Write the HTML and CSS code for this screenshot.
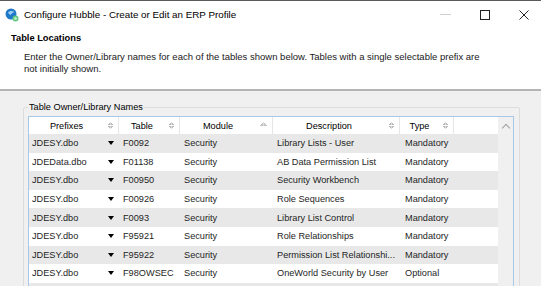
FILE: index.html
```html
<!DOCTYPE html>
<html lang="en">
<head>
    <meta charset="UTF-8">
    <title>Configure Hubble</title>
    <link rel="stylesheet" href="styles.css">
</head>
<body>

<div class="window">
    <div class="titlebar">
        <svg class="app-icon" width="14" height="14" viewBox="0 0 14 14">
            <circle cx="6" cy="6" r="5.5" fill="#1f78c8"/>
            <path d="M3 4.5 Q6 2 9.5 4 Q7 4.5 5.5 7 Q4 6 3 4.5Z" fill="#9fd0f5"/>
            <circle cx="10.5" cy="10.5" r="3" fill="#5cc87a"/>
            <circle cx="10.5" cy="10.5" r="1.6" fill="#b8ecc4"/>
        </svg>
        <span class="title">Configure Hubble - Create or Edit an ERP Profile</span>
        <div class="controls">
            <span class="ctl ctl-min"></span>
            <svg class="ctl" width="10" height="10" viewBox="0 0 10 10"><rect x="0.5" y="0.5" width="9" height="9" fill="none" stroke="#222"/></svg>
            <svg class="ctl" width="10" height="10" viewBox="0 0 10 10"><path d="M0.5 0.5 L9.5 9.5 M9.5 0.5 L0.5 9.5" stroke="#222" stroke-width="1"/></svg>
        </div>
    </div>

    <div class="header">
        <h1>Table Locations</h1>
        <p>Enter the Owner/Library names for each of the tables shown below. Tables with a single selectable prefix are not initially shown.</p>
    </div>

    <div class="content">
        <fieldset class="group">
            <legend>Table Owner/Library Names</legend>
            <div class="grid">
                <div class="grid-body">
                    <div class="row head">
                        <div class="c c-prefix"><span class="lbl">Prefixes</span><span class="sort"></span></div>
                        <div class="c c-table"><span class="lbl">Table</span><span class="sort"></span></div>
                        <div class="c c-module"><span class="lbl">Module</span><span class="sort up"></span></div>
                        <div class="c c-desc"><span class="lbl">Description</span><span class="sort"></span></div>
                        <div class="c c-type"><span class="lbl">Type</span><span class="sort"></span></div>
                        <div class="c c-fill"></div>
                    </div>
                    <div id="rows"></div>
                </div>
                <div class="scrollbar"><span class="chev"></span></div>
            </div>
        </fieldset>
    </div>
</div>

<script>
    const data = [
        ['JDESY.dbo', 'F0092', 'Security', 'Library Lists - User', 'Mandatory'],
        ['JDEData.dbo', 'F01138', 'Security', 'AB Data Permission List', 'Mandatory'],
        ['JDESY.dbo', 'F00950', 'Security', 'Security Workbench', 'Mandatory'],
        ['JDESY.dbo', 'F00926', 'Security', 'Role Sequences', 'Mandatory'],
        ['JDESY.dbo', 'F0093', 'Security', 'Library List Control', 'Mandatory'],
        ['JDESY.dbo', 'F95921', 'Security', 'Role Relationships', 'Mandatory'],
        ['JDESY.dbo', 'F95922', 'Security', 'Permission List Relationshi...', 'Mandatory'],
        ['JDESY.dbo', 'F98OWSEC', 'Security', 'OneWorld Security by User', 'Optional'],
        ['', '', '', '', '']
    ];
    const rows = document.getElementById('rows');
    data.forEach(function(r) {
        const row = document.createElement('div');
        row.className = 'row';
        row.innerHTML =
            '<div class="c c-prefix"><span class="lbl">' + r[0] + '</span>' + (r[0] ? '<span class="drop"></span>' : '') + '</div>' +
            '<div class="c c-table">' + r[1] + '</div>' +
            '<div class="c c-module">' + r[2] + '</div>' +
            '<div class="c c-desc">' + r[3] + '</div>' +
            '<div class="c c-type">' + r[4] + '</div>' +
            '<div class="c c-fill"></div>';
        rows.appendChild(row);
    });
</script>
</body>
</html>
```

FILE: styles.css
```css
body {
    margin: 0;
    width: 541px;
    height: 286px;
    overflow: hidden;
    font-family: "Liberation Sans", Arial, sans-serif;
    font-size: 9px;
    color: #000;
    background: #f0f0f0;
}
.window {
    border-top: 1px solid #5a5a5a;
}
.titlebar {
    height: 27px;
    display: flex;
    align-items: center;
    background: #fff;
    padding-left: 5px;
}
.app-icon {
    margin-right: 5px;
}
.title {
    font-size: 9.8px;
    color: #000;
}
.controls {
    margin-left: auto;
    display: flex;
    align-items: center;
    height: 100%;
}
.ctl {
    display: block;
    margin-left: 29px;
}
.ctl:last-child {
    margin-right: 12px;
}
.ctl-min {
    width: 11px;
    height: 1px;
    background: #d0d0d0;
}
.header {
    background: #fff;
    height: 63px;
    box-sizing: border-box;
    padding: 4px 0 0 11px;
    border-bottom: 2px solid #b4b4b4;
}
h1 {
    margin: 0;
    font-size: 9.3px;
    line-height: 13px;
    font-weight: bold;
}
.header p {
    margin: 6px 0 0 13px;
    line-height: 12px;
    width: 462px;
    font-size: 9.5px;
    color: #1a1a1a;
}
.content {
    padding: 10px 0 0 23px;
}
.group {
    margin: 0;
    padding: 2px 5px 0 4px;
    width: 497px;
    box-sizing: border-box;
    border: 1px solid #dcdcdc;
    border-radius: 2px;
}
.group legend {
    padding: 0 1px;
    margin-left: 0;
    line-height: 13px;
    font-size: 9.2px;
}
.grid {
    display: flex;
    border: 1px solid #a8c8e8;
    height: 200px;
    background: #fff;
    font-size: 9.2px;
}
.grid-body {
    width: 469px;
}
.row {
    display: flex;
    height: 18.6px;
    align-items: center;
    color: #1e1e1e;
}
#rows .row:nth-child(odd) {
    background: #e8e8e8;
}
.row.head {
    height: 17px;
    background: #fff;
    color: #000;
}
.c {
    box-sizing: border-box;
    padding-left: 4px;
    white-space: nowrap;
    overflow: hidden;
    display: flex;
    align-items: center;
    height: 100%;
}
.c-prefix { width: 90px; padding-left: 3px; }
.c-table { width: 61px; }
.c-module { width: 93px; }
.c-desc { width: 127px; }
.c-type { width: 54px; padding-left: 5px; }
.c-fill { width: 44px; }
.c-prefix .lbl {
    flex: 1;
}
.head .c {
    border-right: 1px solid #e6e6e6;
    padding-left: 0;
}
.head .c-fill {
    border-right: none;
}
.head .lbl {
    flex: 1;
    text-align: center;
}
.sort {
    width: 5px;
    height: 7px;
    margin: 0 5px 0 4px;
    background:
        linear-gradient(to bottom right, transparent 50%, #b8b8b8 50%) 0 0 / 2.5px 3px no-repeat,
        linear-gradient(to bottom left, transparent 50%, #b8b8b8 50%) 2.5px 0 / 2.5px 3px no-repeat,
        linear-gradient(to top right, transparent 50%, #b8b8b8 50%) 0 4px / 2.5px 3px no-repeat,
        linear-gradient(to top left, transparent 50%, #b8b8b8 50%) 2.5px 4px / 2.5px 3px no-repeat;
}
.sort.up {
    width: 7px;
    height: 4px;
    margin-bottom: 3px;
    background:
        linear-gradient(to bottom right, transparent 50%, #c4c4c4 50%) 0 0 / 3.5px 4px no-repeat,
        linear-gradient(to bottom left, transparent 50%, #c4c4c4 50%) 3.5px 0 / 3.5px 4px no-repeat;
}
.drop {
    width: 0;
    height: 0;
    border-left: 3.5px solid transparent;
    border-right: 3.5px solid transparent;
    border-top: 4px solid #000;
    margin-right: 5px;
}
.scrollbar {
    width: 15px;
    background: #f0f0f0;
    display: flex;
    justify-content: center;
}
.chev {
    width: 5px;
    height: 5px;
    margin-top: 8px;
    border-left: 1px solid #a0a0a0;
    border-top: 1px solid #a0a0a0;
    transform: rotate(45deg);
}
```
